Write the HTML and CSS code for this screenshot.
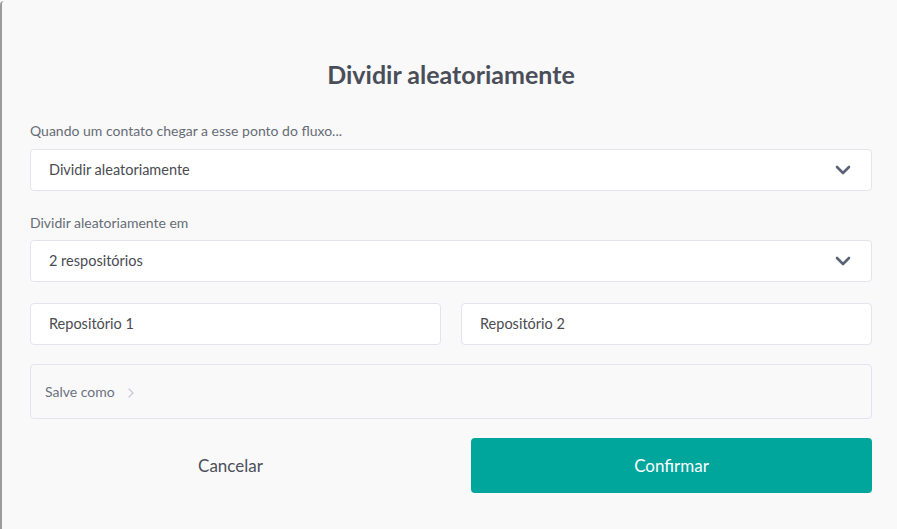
FILE: index.html
```html
<!DOCTYPE html>
<html lang="pt">
<head>
<meta charset="utf-8">
<link rel="stylesheet" href="styles.css">
</head>
<body>
<div class="modal">
  <h1 class="title">Dividir aleatoriamente</h1>

  <div class="label">Quando um contato chegar a esse ponto do fluxo...</div>
  <div class="select">
    <span>Dividir aleatoriamente</span>
    <svg class="chev" width="16" height="10" viewBox="0 0 16 10"><path d="M2 2 L8 8 L14 2" fill="none" stroke="#5b6477" stroke-width="2.6" stroke-linecap="round" stroke-linejoin="round"/></svg>
  </div>

  <div class="label label2">Dividir aleatoriamente em</div>
  <div class="select">
    <span>2 respositórios</span>
    <svg class="chev" width="16" height="10" viewBox="0 0 16 10"><path d="M2 2 L8 8 L14 2" fill="none" stroke="#5b6477" stroke-width="2.6" stroke-linecap="round" stroke-linejoin="round"/></svg>
  </div>

  <div class="row">
    <div class="input">Repositório 1</div>
    <div class="input">Repositório 2</div>
  </div>

  <div class="save">
    <span>Salve como</span>
    <svg class="chev-r" width="8" height="12" viewBox="0 0 8 12"><path d="M2 2 L6 6 L2 10" fill="none" stroke="#c9ccd2" stroke-width="1.4" stroke-linecap="round" stroke-linejoin="round"/></svg>
  </div>

  <div class="actions">
    <button class="btn cancel">Cancelar</button>
    <button class="btn confirm">Confirmar</button>
  </div>
</div>
</body>
</html>
```
FILE: styles.css
```css
html, body {
  margin: 0;
  padding: 0;
  background: #f9f9f9;
}
body {
  font-family: Lato, "Open Sans", sans-serif;
  width: 897px;
  height: 529px;
  overflow: hidden;
}
.modal {
  box-sizing: border-box;
  height: 529px;
  margin-top: 1px;
  border-left: 2px solid #9c9c9c;
  border-top-left-radius: 4px;
  background: #f9f9f9;
  padding: 58px 25px 0 28px;
}
.title {
  margin: 0;
  text-align: center;
  font-size: 25px;
  line-height: 30px;
  font-weight: 700;
  color: #4a4e59;
}
.label {
  margin-top: 32px;
  font-size: 14px;
  line-height: 20px;
  color: #676c76;
  margin-bottom: 8px;
}
.label.label2 {
  margin-top: 22px;
  margin-bottom: 7px;
}
.select, .input {
  box-sizing: border-box;
  height: 42px;
  background: #fff;
  border: 1px solid #e2e5ec;
  border-radius: 4px;
  display: flex;
  align-items: center;
  justify-content: space-between;
  padding: 0 20px 0 18px;
  font-size: 14.5px;
  line-height: 20px;
  color: #4a4c52;
}
.select span, .input {
  padding-bottom: 1px;
}
.chev {
  display: block;
}
.row {
  margin-top: 21px;
  display: grid;
  grid-template-columns: 1fr 1fr;
  gap: 20px;
}
.save {
  box-sizing: border-box;
  margin-top: 19px;
  height: 55px;
  border: 1px solid #e2e5ec;
  border-radius: 4px;
  display: flex;
  align-items: center;
  gap: 12px;
  padding: 0 14px;
  font-size: 14px;
  color: #6b7180;
}
.chev-r {
  display: block;
  margin-top: 2px;
}
.actions {
  margin-top: 19px;
  display: grid;
  grid-template-columns: 1fr 1fr;
  gap: 40px;
}
.btn {
  height: 55px;
  border: none;
  border-radius: 4px;
  font-family: Lato, "Open Sans", sans-serif;
  font-size: 17px;
  cursor: pointer;
}
.cancel {
  background: transparent;
  color: #4b4f5a;
}
.confirm {
  background: #00a59c;
  color: #fff;
}
```
